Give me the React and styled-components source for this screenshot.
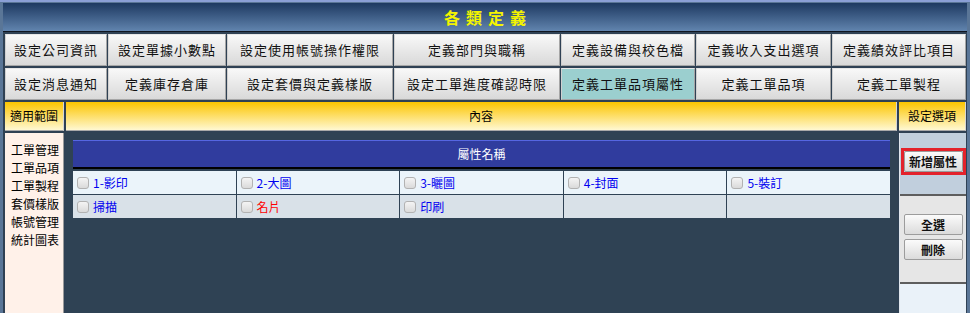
import React from "react";
import styled, { createGlobalStyle } from "styled-components";

const GlobalStyle = createGlobalStyle`
  html, body {
    margin: 0;
    padding: 0;
    background: #5a7697;
  }
  body {
    font-family: "Noto Sans CJK TC", "Noto Sans", sans-serif;
  }
`;

const tabs = [
  { label: "設定公司資訊" },
  { label: "設定單據小數點" },
  { label: "設定使用帳號操作權限" },
  { label: "定義部門與職稱" },
  { label: "定義設備與校色檔" },
  { label: "定義收入支出選項" },
  { label: "定義績效評比項目" },
  { label: "設定消息通知" },
  { label: "定義庫存倉庫" },
  { label: "設定套價與定義樣版" },
  { label: "設定工單進度確認時限" },
  { label: "定義工單品項屬性", active: true },
  { label: "定義工單品項" },
  { label: "定義工單製程" },
];

const scopes = ["工單管理", "工單品項", "工單製程", "套價樣版", "帳號管理", "統計圖表"];

const attrRows = [
  [
    { name: "1-影印" },
    { name: "2-大圖" },
    { name: "3-曬圖" },
    { name: "4-封面" },
    { name: "5-裝訂" },
  ],
  [{ name: "掃描" }, { name: "名片", warn: true }, { name: "印刷" }, null, null],
];

export default function App() {
  return (
    <>
      <GlobalStyle />
      <Frame>
        <TitleBar>
          <Title>各類定義</Title>
        </TitleBar>
        <Board>
          <TabGrid>
            {tabs.map((t) => (
              <Tab key={t.label} $active={t.active}>
                {t.label}
              </Tab>
            ))}
          </TabGrid>

          <Main>
            <HeadCell>適用範圍</HeadCell>
            <HeadCell>內容</HeadCell>
            <HeadCell>設定選項</HeadCell>

            <ScopeList>
              {scopes.map((s) => (
                <ScopeItem key={s}>{s}</ScopeItem>
              ))}
            </ScopeList>

            <ContentArea>
              <AttrTable>
                <AttrHeader>屬性名稱</AttrHeader>
                {attrRows.map((row, r) =>
                  row.map((cell, c) => (
                    <AttrCell key={`${r}-${c}`} $alt={r % 2 === 1} $warn={cell && cell.warn}>
                      {cell && (
                        <>
                          <Check type="checkbox" />
                          <span>{cell.name}</span>
                        </>
                      )}
                    </AttrCell>
                  ))
                )}
              </AttrTable>
            </ContentArea>

            <OptionPanel>
              <AddBox>
                <Marked>
                  <OptButton>新增屬性</OptButton>
                </Marked>
              </AddBox>
              <ActionBox>
                <OptButton>全選</OptButton>
                <OptButton>刪除</OptButton>
              </ActionBox>
              <RestBox />
            </OptionPanel>
          </Main>
        </Board>
      </Frame>
    </>
  );
}

const Frame = styled.div`
  width: 970px;
  height: 313px;
  box-sizing: border-box;
  border-top: 2px solid #8a9fd6;
  padding: 1px 3px 0 3px;
  background: #5a7697;
  display: flex;
  flex-direction: column;
  overflow: hidden;
`;

const TitleBar = styled.div`
  height: 28px;
  border-bottom: 1px solid #0f1520;
  background: linear-gradient(#1d3961, #6184ae);
  display: flex;
  align-items: center;
  justify-content: center;
`;

const Title = styled.div`
  color: #f4f400;
  font-size: 16px;
  font-weight: bold;
  letter-spacing: 6px;
  padding-left: 6px;
  line-height: 18px;
`;

const Board = styled.div`
  flex: 1;
  background: #2f4154;
  padding: 2px 1px 0 2px;
  display: flex;
  flex-direction: column;
`;

const TabGrid = styled.div`
  display: grid;
  grid-template-columns: 102px 118px 166px 166px 134px 135px 134px;
  grid-auto-rows: 32px;
  column-gap: 1px;
  row-gap: 2px;
`;

const Tab = styled.div`
  box-sizing: border-box;
  border: 1px solid #a6a6a6;
  border-top-color: #e6e6e6;
  border-left-color: #d0d0d0;
  background: ${(p) => (p.$active ? "#9bcfcf" : "linear-gradient(#f8f8f8, #d9d9d9)")};
  display: flex;
  align-items: center;
  justify-content: center;
  font-size: 13px;
  letter-spacing: 1px;
  color: #111;
  line-height: 16px;
  white-space: nowrap;
`;

const Main = styled.div`
  flex: 1;
  margin-top: 2px;
  display: grid;
  grid-template-columns: 59px 831px 67px;
  grid-template-rows: 29px 1fr;
  column-gap: 2px;
  row-gap: 2px;
`;

const HeadCell = styled.div`
  box-sizing: border-box;
  border-bottom: 1px solid #a9a9a9;
  border-right: 1px solid #d6d6d6;
  background: linear-gradient(#fcc500, #fff8d2);
  display: flex;
  align-items: center;
  justify-content: center;
  font-size: 12px;
  line-height: 14px;
  color: #000;
`;

const ScopeList = styled.div`
  box-sizing: border-box;
  background: #fff1e9;
  border-right: 1px solid #9a9a9a;
  padding: 8px 0 0 6px;
`;

const ScopeItem = styled.div`
  font-size: 12px;
  line-height: 18px;
  color: #000;
  white-space: nowrap;
`;

const ContentArea = styled.div`
  background: #2f4254;
  padding: 7px;
`;

const AttrTable = styled.div`
  display: grid;
  grid-template-columns: repeat(5, 1fr);
  grid-template-rows: 30px;
  grid-auto-rows: 23px;
  gap: 1px;
`;

const AttrHeader = styled.div`
  grid-column: 1 / -1;
  height: 29px;
  box-sizing: border-box;
  margin-bottom: 1px;
  background: #303c9e;
  border-top: 1px solid #5666e2;
  border-bottom: 2px solid #000;
  color: #fff;
  font-size: 12px;
  line-height: 14px;
  display: flex;
  align-items: center;
  justify-content: center;
`;

const AttrCell = styled.div`
  background: ${(p) => (p.$alt ? "#d9e1e8" : "#ebf4fa")};
  color: ${(p) => (p.$warn ? "#ff0000" : "#0000f0")};
  display: flex;
  align-items: center;
  gap: 4px;
  padding-left: 4px;
  font-size: 12px;
  line-height: 14px;
  white-space: nowrap;
`;

const Check = styled.input`
  appearance: none;
  margin: 0;
  width: 12px;
  height: 12px;
  box-sizing: border-box;
  border: 1px solid #b2b2b2;
  border-radius: 3px;
  background: linear-gradient(#f4f4f4, #dadada);
`;

const OptionPanel = styled.div`
  display: flex;
  flex-direction: column;
  border-left: 1px solid #dfe6ee;
`;

const AddBox = styled.div`
  height: 63px;
  box-sizing: border-box;
  background: #c1cfdd;
  border-bottom: 2px solid #5e5e5e;
  padding-top: 15px;
  display: flex;
  justify-content: center;
  align-items: flex-start;
`;

const Marked = styled.div`
  border: 3px solid #e3222b;
  display: flex;
`;

const ActionBox = styled.div`
  height: 88px;
  box-sizing: border-box;
  background: #e6e6e6;
  border-bottom: 2px solid #5e5e5e;
  padding-top: 18px;
  display: flex;
  flex-direction: column;
  align-items: center;
  gap: 4px;
`;

const RestBox = styled.div`
  flex: 1;
  background: #eaf2f9;
`;

const OptButton = styled.button`
  width: 59px;
  height: 21px;
  box-sizing: border-box;
  padding: 0;
  border: 1px solid #9c9c9c;
  border-radius: 2px;
  background: linear-gradient(#fbfbfb, #dbdbdb);
  font-family: inherit;
  font-size: 12px;
  font-weight: bold;
  line-height: 14px;
  color: #111;
  cursor: pointer;
`;
